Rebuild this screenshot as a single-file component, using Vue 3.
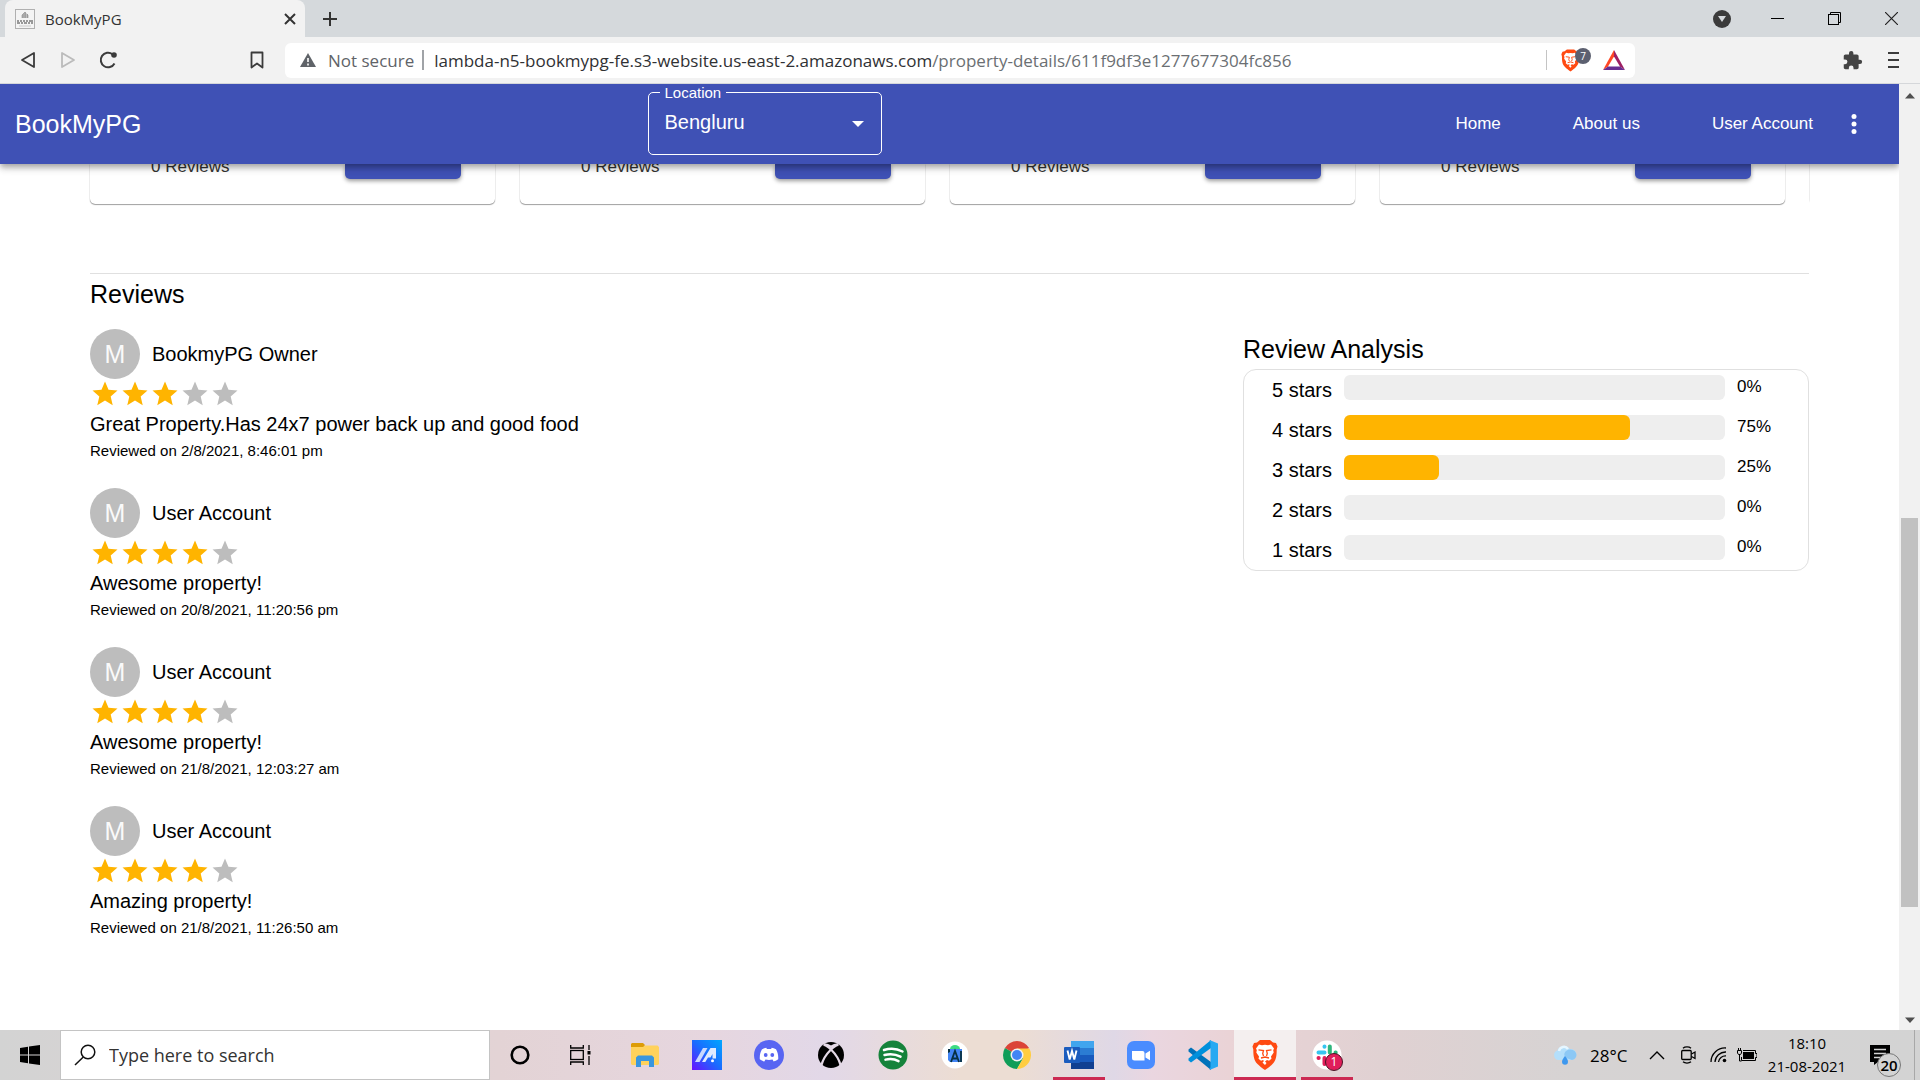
<script setup>
import { ref } from 'vue'

const location = ref('Bengluru')
const search = ref('')
const cards = [1, 2, 3, 4, 5]

const reviews = [
  { name: 'BookmyPG Owner', rating: 3, text: 'Great Property.Has 24x7 power back up and good food', date: '2/8/2021, 8:46:01 pm' },
  { name: 'User Account', rating: 4, text: 'Awesome property!', date: '20/8/2021, 11:20:56 pm' },
  { name: 'User Account', rating: 4, text: 'Awesome property!', date: '21/8/2021, 12:03:27 am' },
  { name: 'User Account', rating: 4, text: 'Amazing property!', date: '21/8/2021, 11:26:50 am' },
]

const analysis = [
  { stars: 5, percent: 0 },
  { stars: 4, percent: 75 },
  { stars: 3, percent: 25 },
  { stars: 2, percent: 0 },
  { stars: 1, percent: 0 },
]
</script>

<template>
  <div class="screen">
    <header class="tabstrip">
      <div class="tab">
        <svg class="favicon" width="20" height="20" viewBox="0 0 20 20">
          <rect x="0.5" y="0.5" width="19" height="19" fill="#f4f4f4" stroke="#b0b0b0" />
          <path d="M7 9V6l3-3 1 1v5M12 9V5l1 1v3" fill="#aaa" stroke="#8a8a8a" stroke-width="0.6" />
          <path d="M2 12h2M5 12h2M8 12h2M11 12h2M14 12h4M2 14h3M6 14h2M9 14h3M13 14h2M16 14h2" stroke="#999" stroke-width="2" />
          <path d="M4 17h12" stroke="#ccc" />
        </svg>
        <span class="tab-title">BookMyPG</span>
        <button class="plain tab-close" aria-label="Close tab">
          <svg width="12" height="12" viewBox="0 0 12 12"><path d="M1 1l10 10M11 1L1 11" stroke="#333" stroke-width="2" /></svg>
        </button>
      </div>
      <button class="plain new-tab" aria-label="New tab">
        <svg width="16" height="16" viewBox="0 0 16 16"><path d="M8 1v14M1 8h14" stroke="#333" stroke-width="2" /></svg>
      </button>
      <div class="window-buttons">
        <button class="plain winbtn circle-btn" aria-label="Search tabs">
          <svg width="18" height="18" viewBox="0 0 18 18"><circle cx="9" cy="9" r="9" fill="#3b3b3b" /><path d="M5 6h8l-4 6z" fill="#d5d9dc" /></svg>
        </button>
        <button class="plain winbtn" aria-label="Minimize">
          <svg width="13" height="13" viewBox="0 0 13 13"><path d="M0 6.5h13" stroke="#000" /></svg>
        </button>
        <button class="plain winbtn" aria-label="Restore">
          <svg width="13" height="13" viewBox="0 0 13 13" fill="none" stroke="#000"><rect x="0.5" y="2.5" width="10" height="10" /><path d="M2.5 2.5v-2h10v10h-2" /></svg>
        </button>
        <button class="plain winbtn" aria-label="Close">
          <svg width="13" height="13" viewBox="0 0 13 13"><path d="M0 0l13 13M13 0L0 13" stroke="#222" stroke-width="1.2" /></svg>
        </button>
      </div>
    </header>

    <nav class="toolbar">
      <button class="plain tool" aria-label="Back">
        <svg width="18" height="18" viewBox="0 0 18 18"><path d="M15 2v14L3 9z" fill="none" stroke="#3b3b3b" stroke-width="1.8" stroke-linejoin="round" /></svg>
      </button>
      <button class="plain tool" aria-label="Forward">
        <svg width="18" height="18" viewBox="0 0 18 18"><path d="M3 2v14l12-7z" fill="none" stroke="#bbb" stroke-width="1.8" stroke-linejoin="round" /></svg>
      </button>
      <button class="plain tool" aria-label="Reload">
        <svg width="18" height="18" viewBox="0 0 18 18"><path d="M15.5 12.5A7.3 7.3 0 1 1 13.5 3.2" fill="none" stroke="#3b3b3b" stroke-width="2" /><circle cx="15" cy="4" r="2.8" fill="#3b3b3b" /></svg>
      </button>
      <button class="plain tool bookmark" aria-label="Bookmark">
        <svg width="16" height="18" viewBox="0 0 16 18"><path d="M2.500 1.500h11v15l-5.500-4-5.500 4z" fill="none" stroke="#3b3b3b" stroke-width="1.8" stroke-linejoin="round" /></svg>
      </button>
      <div class="address">
        <svg width="16" height="14" viewBox="0 0 16 14"><path d="M8 0l8 14H0z" fill="#5f6368" /><path d="M8 5v4M8 10.500v2" stroke="#fff" stroke-width="1.6" /></svg>
        <span class="insecure">Not secure</span>
        <span class="sep"></span>
        <span class="url"><b>lambda-n5-bookmypg-fe.s3-website.us-east-2.amazonaws.com</b>/property-details/611f9df3e1277677304fc856</span>
        <span class="sep light"></span>
        <span class="shield">
          <svg width="19" height="23" viewBox="0 0 26 30"><use href="#brave-lion" /></svg>
          <span class="shield-count">7</span>
        </span>
        <svg class="bat" width="22" height="20" viewBox="0 0 22 20"><path d="M11 0L0 20l5-3.500 6-10z" fill="#ff4724" /><path d="M11 0l11 20-5-3.500-6-10z" fill="#9e1f63" /><path d="M0 20h22l-5-3.500H5z" fill="#662d91" /></svg>
      </div>
      <button class="plain tool puzzle" aria-label="Extensions">
        <svg width="21" height="21" viewBox="0 0 24 24"><path fill="#444" d="M20.500 11H19V7c0-1.100-.9-2-2-2h-4V3.500a2.500 2.500 0 0 0-5 0V5H4c-1.100 0-2 .9-2 2v3.800h1.500a2.700 2.700 0 0 1 0 5.400H2V20c0 1.100.9 2 2 2h3.800v-1.500a2.700 2.700 0 0 1 5.400 0V22H17c1.100 0 2-.9 2-2v-4h1.500a2.500 2.500 0 0 0 0-5z" /></svg>
      </button>
      <button class="plain tool" aria-label="Menu">
        <svg width="12" height="18" viewBox="0 0 12 18"><path d="M1 2h11M1 9h11M1 16h11" stroke="#3b3b3b" stroke-width="2" /></svg>
      </button>
    </nav>

    <div class="viewport">
      <div class="page">
        <header class="appbar">
          <a class="brand" href="#">BookMyPG</a>
          <fieldset class="location">
            <legend><label for="location">Location</label></legend>
            <select id="location" v-model="location">
              <option>Bengluru</option>
            </select>
            <svg class="caret" width="12" height="6" viewBox="0 0 12 6"><path d="M0 0h12L6 6z" fill="#fff" /></svg>
          </fieldset>
          <nav class="links">
            <a href="#">Home</a>
            <a href="#">About us</a>
            <a href="#">User Account</a>
            <button class="plain" aria-label="More">
              <svg width="6" height="20" viewBox="0 0 6 20" fill="#fff"><circle cx="3" cy="2.500" r="2.500" /><circle cx="3" cy="10" r="2.500" /><circle cx="3" cy="17.500" r="2.500" /></svg>
            </button>
          </nav>
        </header>

        <main class="content">
          <section class="carousel">
            <article v-for="c in cards" :key="c" class="card">
              <span>0 Reviews</span>
              <button class="plain card-action" aria-label="View"></button>
            </article>
          </section>

          <section class="reviews">
            <div class="review-list">
              <h2>Reviews</h2>
              <article v-for="(r, i) in reviews" :key="i" class="review">
                <div class="author"><span class="avatar">M</span><span>{{ r.name }}</span></div>
                <div class="stars" role="img" :aria-label="r.rating + ' of 5'">
                  <svg v-for="n in 5" :key="n" :class="{ on: n <= r.rating }" width="30" height="30" viewBox="0 0 24 24">
                    <path d="M12 17.270L18.180 21l-1.640-7.030L22 9.240l-7.190-.61L12 2 9.190 8.630 2 9.240l5.460 4.730L5.820 21z" />
                  </svg>
                </div>
                <p class="text">{{ r.text }}</p>
                <p class="date">Reviewed on {{ r.date }}</p>
              </article>
            </div>
            <aside class="analysis">
              <h2>Review Analysis</h2>
              <div class="bars">
                <div v-for="a in analysis" :key="a.stars" class="bar-row">
                  <span class="bar-label">{{ a.stars }} stars</span>
                  <div class="track"><div class="fill" :style="{ width: a.percent + '%' }"></div></div>
                  <span class="percent">{{ a.percent }}%</span>
                </div>
              </div>
            </aside>
          </section>
        </main>
      </div>
      <div class="scrollbar">
        <svg width="10" height="6" viewBox="0 0 10 6"><path d="M0 5.500h10L5 0z" fill="#505050" /></svg>
        <div class="rail"><div class="thumb"></div></div>
        <svg width="10" height="6" viewBox="0 0 10 6"><path d="M0 0.500h10L5 6z" fill="#505050" /></svg>
      </div>
    </div>

    <footer class="taskbar">
      <button class="plain start" aria-label="Start">
        <svg width="20" height="20" viewBox="0 0 20 20"><path d="M0 3l8-1.200V9.500H0zM9 1.600L20 0v9.500H9zM0 10.500h8v7.700L0 17zM9 10.500h11V20L9 18.400z" /></svg>
      </button>
      <label class="searchbox">
        <svg width="22" height="22" viewBox="0 0 22 22" fill="none" stroke="#111" stroke-width="1.500"><circle cx="14" cy="8" r="6.800" /><path d="M9.300 13L1 21" /></svg>
        <input v-model="search" type="text" placeholder="Type here to search" aria-label="Search" />
      </label>
      <div class="system-apps">
        <button class="plain" aria-label="Cortana">
          <svg width="20" height="20" viewBox="0 0 20 20"><circle cx="10" cy="10" r="8.300" fill="none" stroke="#000" stroke-width="2.600" /></svg>
        </button>
        <button class="plain" aria-label="Task view">
          <svg width="21" height="20" viewBox="0 0 21 20" fill="none" stroke="#000" stroke-width="1.300"><rect x="0.700" y="5.500" width="12.600" height="9" /><path d="M0.700 0v3h12.600V0M0.700 20v-3h12.600v3M19 0v5M19 11v9" /><path d="M17.500 6h3v3.500h-3z" fill="#000" stroke="none" /></svg>
        </button>
      </div>
      <div class="apps">
        <button class="plain" aria-label="File Explorer">
          <svg width="28" height="24" viewBox="0 0 28 24"><path d="M1 0h11l2 2-2 3H0V1z" fill="#dd9c06" /><path d="M0 4h12l2-1.500h12.500L28 4v17l-1 1H1l-1-1z" fill="#ffd25c" /><path d="M5 24v-9.500l2-2h14l2 2V24h-5v-6h-8v6z" fill="#3a96dd" /></svg>
        </button>
        <button class="plain" aria-label="Armoury">
          <svg width="30" height="30" viewBox="0 0 30 30"><defs><linearGradient id="g-arm" x1="0" y1="1" x2="1" y2="0"><stop offset="0" stop-color="#6a10ff" /><stop offset="0.500" stop-color="#1a6bff" /><stop offset="1" stop-color="#00a8ff" /></linearGradient></defs><path d="M0 0h30v30H0z" fill="url(#g-arm)" /><path d="M3 22L11 8h4.500L7.500 22z" fill="#c8d8ff" /><path d="M10 22l8.500-14H24v10.500h-3.500v-4.500l-2 3.500h-2.500l-2.700 4.500z" fill="#dfeaff" /><circle cx="20.500" cy="20.800" r="1.500" fill="#fff" /></svg>
        </button>
        <button class="plain" aria-label="Discord">
          <svg width="30" height="30" viewBox="0 0 30 30"><circle cx="15" cy="15" r="15" fill="#5865f2" /><path d="M8 9.300c1.600-.9 3-1.300 4.300-1.500l.6 1.200h4.200l.6-1.200c1.300.2 2.700.6 4.300 1.500 1.700 3 2.500 6.200 2.200 10-1.600 1.200-3 1.800-4.500 2.200l-1.200-2c-2.300.6-4.700.6-7 0l-1.200 2c-1.500-.4-2.900-1-4.500-2.200-.3-3.800.5-7 2.200-10z" fill="#fff" /><circle cx="11.700" cy="15" r="1.900" fill="#5865f2" /><circle cx="18.300" cy="15" r="1.900" fill="#5865f2" /></svg>
        </button>
        <button class="plain" aria-label="Xbox">
          <svg width="26" height="26" viewBox="0 0 26 26"><circle cx="13" cy="13" r="13" /><path d="M5.500 2.500C8 2 10.500 3 13 4.700 15.500 3 18 2 20.500 2.500M3.500 23C5 17 9 11.500 13 7.500 17 11.500 21 17 22.500 23M5.500 2.800C8.500 3 11 5.500 13 7.500c2-2 4.500-4.500 7.500-4.700" fill="none" stroke="#e4d9e6" stroke-width="2.200" /></svg>
        </button>
        <button class="plain" aria-label="Spotify">
          <svg width="30" height="30" viewBox="0 0 30 30"><circle cx="15" cy="15" r="14.500" fill="#15833b" /><path d="M6 10c6-2 13-1.500 18.500 1.500M6.500 15c5.500-1.500 11-1 16 1.700M7.500 19.600c4.500-1.200 9-.8 13 1.500" fill="none" stroke="#fff" stroke-width="2.500" stroke-linecap="round" /></svg>
        </button>
        <button class="plain" aria-label="Android Studio">
          <svg width="28" height="28" viewBox="0 0 28 28"><circle cx="14" cy="14" r="13.500" fill="#fff" /><path d="M9 8a5 4 0 0 1 10 0z" fill="#3ddc84" /><path d="M7 8h14v13H9l-2-2z" fill="#4285f4" /><path d="M7 8h2v3l-2 1z" fill="#073042" /><path d="M10 21l4-11 4 11M11.500 17.500h5M20 10v11" fill="none" stroke="#073042" stroke-width="1.800" /></svg>
        </button>
        <button class="plain" aria-label="Chrome">
          <svg width="28" height="28" viewBox="0 0 28 28"><path d="M14 14L1.900 7A14 14 0 0 1 26.100 7z" fill="#db4437" /><path d="M14 14L1.900 7A14 14 0 0 0 14 28l6-10.500z" fill="#0f9d58" /><path d="M14 7.500h12.400A14 14 0 0 1 14 28l6-10.500z" fill="#ffcd40" /><circle cx="14" cy="14" r="6.500" fill="#f1f1f1" /><circle cx="14" cy="14" r="5" fill="#4285f4" /></svg>
        </button>
        <button class="plain running" aria-label="Word">
          <svg width="30" height="28" viewBox="0 0 30 28"><path d="M7 0h23v7H7z" fill="#41a5ee" /><path d="M7 7h23v7H7z" fill="#2b7cd3" /><path d="M7 14h23v7H7z" fill="#185abd" /><path d="M7 21h23v7H7z" fill="#103f91" /><rect y="6" width="16" height="16" rx="1" fill="#1b5cbe" /><path d="M3.500 9.500l2.200 9 2.300-8.500 2.300 8.500 2.200-9" fill="none" stroke="#fff" stroke-width="1.900" /></svg>
        </button>
        <button class="plain" aria-label="Zoom">
          <svg width="28" height="28" viewBox="0 0 28 28"><rect width="28" height="28" rx="7" fill="#4a8cff" /><path d="M5 10h10.500a2 2 0 0 1 2 2v7.500H7.500A2.500 2.500 0 0 1 5 17zM18.500 12.500L23 9.700v9.600l-4.500-2.800z" fill="#fff" /></svg>
        </button>
        <button class="plain" aria-label="Visual Studio Code">
          <svg width="30" height="30" viewBox="0 0 30 30"><path d="M0.500 9.500L3 7.500 23 22v8L0.500 11.500z" fill="#0072ba" /><path d="M0.500 20.500L3 22.500 23 8V0L0.500 18.500z" fill="#0090dc" /><path d="M21.500 0L30 3.500v23L21.500 30l1-3V3z" fill="#27a9f2" /></svg>
        </button>
        <button class="plain running active" aria-label="Brave">
          <svg width="26" height="30" viewBox="0 0 26 30">
            <g id="brave-lion">
              <path d="M8 0h10l3 2.500 3 .5 1.500 3.500-.8 3c0 7-.7 11-4.200 14.500-2 2-5 4.500-7.500 6-2.500-1.500-5.500-4-7.500-6C2 20.500 1.300 16.500 1.300 9.500l-.8-3L2 3l3-.5z" fill="#ff4a12" />
              <path d="M7 4.500l3 .7 3-.5 3 .5 3-.7 3 4-.8 1.800.5 2.200-2.700 4 .5 2.300-2.500 2-2-.8-2 1.500 1.500 1.500L13 25l-2.500-2.500L12 21l-1-1-2 .8-2.500-2 .5-2.300-2.700-4 .5-2.200L4 8.500z" fill="#fff" />
              <path d="M6.500 9.800l5 .7-.8 3 .8 2.500M19.500 9.800l-5 .7.8 3-.8 2.500M9 18l4-1 4 1" fill="none" stroke="#ff4a12" stroke-width="1.300" />
            </g>
          </svg>
        </button>
        <button class="plain running" aria-label="Slack">
          <svg width="30" height="30" viewBox="0 0 30 30"><circle cx="15" cy="15" r="14.500" fill="#fff" /><g fill="none" stroke-width="4" stroke-linecap="round"><path d="M6.500 12.500h6M12.500 6.500v.2" stroke="#36c5f0" /><path d="M17.800 6.500v6M23.500 12.500h.2" stroke="#2eb67d" /><path d="M17.800 18h6M17.800 23.500v.2" stroke="#ecb22e" /><path d="M12.500 18v6M6.500 18h.2" stroke="#e01e5a" /></g></svg>
          <span class="badge">1</span>
        </button>
      </div>
      <div class="tray">
        <svg width="26" height="20" viewBox="0 0 26 20"><path d="M6 15a5 5 0 0 1-.8-9.500A7.500 7.500 0 0 1 18 4a5.600 5.600 0 0 1 2 11z" fill="#b4dffb" /><path d="M14 13a6 5 0 1 1 10-5 5 5 0 0 1-4 7z" fill="#8cc8f5" /><path d="M7 6a5 5 0 0 1 9-2" fill="none" stroke="#e6f6ff" stroke-width="2.500" /><path d="M13 11c2 2.500 3 4 3 5.800a3 3 0 0 1-6 0C10 15 11 13.500 13 11z" fill="#3f98ee" /></svg>
        <span class="temp">28°C</span>
        <svg class="chev" width="16" height="10" viewBox="0 0 16 10"><path d="M1 9l7-7 7 7" fill="none" stroke="#000" stroke-width="1.400" /></svg>
        <svg class="cam" width="15" height="18" viewBox="0 0 15 18" fill="none" stroke="#000" stroke-width="1.300"><rect x="0.700" y="4.500" width="9.500" height="9" rx="1" /><path d="M10.500 8l3.500-2v6.500l-3.500-2M2 2.200C4 .5 8 .5 10 2.200M2 15.800c2 1.700 6 1.700 8 0" /></svg>
        <svg class="wifi" width="17" height="16" viewBox="0 0 17 16" fill="none" stroke="#000" stroke-width="1.300"><path d="M1 15A14 14 0 0 1 16 1M5 15A10.500 10.500 0 0 1 16 5M8.500 15A7 7 0 0 1 16 8.800" /><circle cx="14.500" cy="13.500" r="1.800" fill="#000" stroke="none" /></svg>
        <svg class="battery" width="20" height="14" viewBox="0 0 20 14"><path d="M6 2.500h12.500v3H20v4h-1.500v3H4.500V9" fill="none" stroke="#000" /><path d="M6 4h11v7H6z" /><path d="M0.500 2.500h4v2.500l-1 1.500h-2l-1-1.500zM1.500 0v2.500M3.500 0v2.500M2.500 6v7h2" fill="none" stroke="#000" /></svg>
        <div class="clock"><span>18:10</span><span>21-08-2021</span></div>
        <button class="plain notify" aria-label="Notifications">
          <svg width="20" height="20" viewBox="0 0 20 20"><path d="M0 0h20v17H8l-4 3v-3H0z" /><path d="M4 4.500h12M4 8.500h12M4 12.500h8" stroke="#d3d3d3" stroke-width="1.300" /></svg>
          <span class="notify-count">20</span>
        </button>
      </div>
    </footer>
  </div>
</template>

<style>
body {
  margin: 0;
}
</style>

<style scoped>
* {
  box-sizing: border-box;
}
.screen {
  height: 100vh;
  display: flex;
  flex-direction: column;
  overflow: hidden;
  font-family: "Liberation Sans", Arial, sans-serif;
  color: #000;
}
svg {
  display: block;
  flex: none;
}
a {
  color: inherit;
  text-decoration: none;
}
.plain {
  display: flex;
  align-items: center;
  justify-content: center;
  padding: 0;
  border: 0;
  background: none;
  font: inherit;
}
.tabstrip,
.toolbar,
.taskbar {
  font-family: "Open Sans", "Noto Sans", sans-serif;
}

/* Browser chrome */
.tabstrip {
  display: flex;
  height: 37px;
  flex: none;
  background: #d5d9dc;
}
.tab {
  display: flex;
  align-items: center;
  width: 300px;
  margin-left: 5px;
  padding: 0 9px 0 10px;
  border-radius: 8px 8px 0 0;
  background: #f2f2f2;
}
.tab-title {
  flex: 1;
  margin-left: 10px;
  font-size: 15px;
  color: #333;
}
.new-tab {
  width: 50px;
}
.window-buttons {
  display: flex;
  margin-left: auto;
}
.winbtn {
  width: 57px;
}
.circle-btn {
  width: 54px;
}
.toolbar {
  display: flex;
  align-items: center;
  height: 47px;
  flex: none;
  padding: 0 21px 0 8px;
  border-bottom: 1px solid #d5d7da;
  background: #f2f2f2;
}
.tool {
  width: 40px;
  height: 36px;
}
.tool.bookmark {
  margin: 0 8px 0 109px;
}
.tool.puzzle {
  margin-left: auto;
}
.tool:last-child {
  width: 24px;
  margin-left: 3px;
  justify-content: flex-end;
}
.address {
  display: flex;
  align-items: center;
  flex: 0 1 1350px;
  height: 35px;
  padding: 0 10px 0 15px;
  border-radius: 6px;
  background: #fff;
  font-size: 17px;
  white-space: nowrap;
}
.insecure {
  margin-left: 12px;
  color: #5f6368;
}
.sep {
  width: 2px;
  height: 20px;
  margin: 0 10px 0 8px;
  background: #a0a3a7;
}
.sep.light {
  width: 1px;
  margin: 0 14px;
  background: #c4c4c4;
}
.url {
  flex: 1;
  overflow: hidden;
  color: #6b6f73;
}
.url b {
  font-weight: 400;
  color: #303134;
}
.shield {
  position: relative;
  width: 42px;
}
.shield-count {
  position: absolute;
  top: -1px;
  left: 14px;
  width: 16px;
  height: 16px;
  border-radius: 8px;
  background: #5c6070;
  color: #fff;
  font-size: 10px;
  line-height: 16px;
  text-align: center;
}

/* Web page */
.viewport {
  display: flex;
  flex: 1;
  min-height: 0;
}
.page {
  flex: 1;
  min-width: 0;
  overflow: hidden;
  background: #fff;
}
.appbar {
  position: relative;
  z-index: 1;
  display: grid;
  grid-template-columns: 1fr 234px 1fr;
  align-items: center;
  height: 80px;
  padding: 0 15px;
  background: #3f51b5;
  color: #fff;
  box-shadow: 0 3px 5px -1px rgba(0, 0, 0, 0.2), 0 5px 6px rgba(0, 0, 0, 0.14), 0 1px 12px rgba(0, 0, 0, 0.12);
}
.brand {
  font-size: 25px;
}
.location {
  position: relative;
  right: 185px;
  align-self: start;
  height: 71px;
  margin: 0;
  padding: 0;
  border: 1px solid #fff;
  border-radius: 5px;
}
.location legend {
  margin-left: 11px;
  padding: 0 5px;
  font-size: 15px;
  line-height: 17px;
}
.location select {
  width: 100%;
  height: 42px;
  padding: 0 16px;
  border: 0;
  appearance: none;
  background: transparent;
  color: #fff;
  font-family: inherit;
  font-size: 20px;
}
.caret {
  position: absolute;
  right: 17px;
  top: 20px;
  pointer-events: none;
}
.links {
  display: flex;
  align-items: center;
  justify-content: flex-end;
  padding-right: 27px;
  font-size: 17px;
}
.links a {
  margin-right: 38px;
  white-space: nowrap;
}
.links a + a {
  margin-left: 34px;
}
.links button {
  width: 6px;
}
.content {
  padding: 0 90px;
}
.carousel {
  display: flex;
  gap: 25px;
  overflow: hidden;
  margin: 0 -1px 59px;
  padding: 0 0 10px 1px;
}
.card {
  display: flex;
  flex: 0 0 calc((100% - 100px) / 4);
  align-items: flex-start;
  justify-content: space-between;
  height: 40px;
  padding: 0 34px 0 61px;
  border-radius: 0 0 5px 5px;
  box-shadow: 0 1px 1px rgba(0, 0, 0, 0.35), 0 0 1px rgba(0, 0, 0, 0.35);
  font-size: 17px;
  line-height: 5px;
  color: #333;
}
.card-action {
  width: 116px;
  height: 15px;
  border-radius: 0 0 5px 5px;
  background: #3f51b5;
  box-shadow: 0 2px 4px rgba(0, 0, 0, 0.4);
}
.reviews {
  display: flex;
  justify-content: space-between;
  border-top: 1px solid #e0e0e0;
}
h2 {
  margin: 0;
  font-size: 25px;
  font-weight: 400;
  line-height: 40px;
}
.review-list h2 {
  margin-bottom: 15px;
}
.review {
  height: 159px;
}
.author {
  display: flex;
  align-items: center;
  gap: 12px;
  font-size: 20px;
}
.avatar {
  width: 50px;
  border-radius: 50%;
  background: #bdbdbd;
  color: #fafafa;
  font-size: 25px;
  line-height: 50px;
  text-align: center;
}
.stars {
  display: flex;
  fill: #bdbdbd;
}
.stars .on {
  fill: #ffb400;
}
.review p {
  margin: 0;
}
.text {
  font-size: 20px;
  line-height: 30px;
}
.date {
  font-size: 15px;
  line-height: 24px;
}
.analysis {
  flex: 0 1 566px;
  padding-top: 55px;
}
.bars {
  display: grid;
  gap: 15px;
  padding: 5px 33px 10px 28px;
  border: 1px solid #e0e0e0;
  border-radius: 13px;
}
.bar-row {
  display: grid;
  grid-template-columns: 60px 1fr 38px;
  grid-template-rows: 25px;
  gap: 12px;
}
.bar-label {
  font-size: 20px;
  line-height: 30px;
  white-space: nowrap;
}
.track {
  border-radius: 6px;
  background: #eee;
}
.fill {
  height: 100%;
  border-radius: 6px;
  background: #ffb400;
}
.percent {
  font-size: 17px;
  line-height: 24px;
}
.scrollbar {
  display: flex;
  flex-direction: column;
  align-items: center;
  width: 21px;
  padding: 9px 0 7px;
  background: #f1f1f1;
}
.rail {
  flex: 1;
  width: 17px;
  padding-top: 419px;
}
.thumb {
  height: 389px;
  background: #c1c1c1;
}

/* Desktop taskbar */
.taskbar {
  display: flex;
  height: 50px;
  flex: none;
  background: linear-gradient(90deg, #d3d3d3 0, #e3d3d5 26%, #e6d6df 37%, #e2d8e8 43%, #ecddd3 50%, #ecddd3 53%, #dfd8e6 58%, #ead6e0 60%, #ead3d6 64%, #e0d1d2 72%, #d6d3d3 82%, #d3d3d3 100%);
}
.start {
  width: 60px;
}
.searchbox {
  display: flex;
  align-items: center;
  gap: 13px;
  width: 430px;
  padding-left: 13px;
  border: 1px solid #c4c4c4;
  background: #fff;
}
.searchbox input {
  flex: 1;
  min-width: 0;
  padding: 0;
  border: 0;
  outline: 0;
  font-family: inherit;
  font-size: 18px;
}
.searchbox input::placeholder {
  color: #333;
  opacity: 1;
}
.system-apps {
  display: flex;
  margin-right: 4px;
}
.system-apps button {
  width: 60px;
}
.apps {
  display: flex;
}
.apps button {
  position: relative;
  width: 62px;
}
.running::after {
  content: "";
  position: absolute;
  left: 5px;
  right: 5px;
  bottom: 0;
  height: 3px;
  background: #cc2952;
}
.active {
  background: #f4efef;
}
.active::after {
  left: 0;
  right: 0;
}
.badge {
  position: absolute;
  left: 29px;
  top: 23px;
  width: 18px;
  height: 18px;
  border: 1px solid #4a1526;
  border-radius: 50%;
  background: #e01e5a;
  color: #fff;
  font-size: 12px;
  line-height: 16px;
  text-align: center;
}
.tray {
  display: flex;
  align-items: center;
  margin-left: auto;
  margin-right: 5px;
  padding-right: 9px;
  border-right: 1px solid #a8a8a8;
}
.temp {
  width: 48px;
  margin: 0 11px 0 12px;
  font-size: 17px;
}
.cam {
  margin-left: 16px;
}
.wifi {
  margin-left: 14px;
}
.battery {
  margin-left: 10px;
}
.clock {
  display: grid;
  width: 100px;
  font-size: 15px;
  line-height: 23px;
  text-align: center;
}
.notify {
  position: relative;
  width: 46px;
  height: 50px;
  margin-left: 2px;
  padding-right: 4px;
}
.notify-count {
  position: absolute;
  left: 18px;
  top: 23px;
  width: 24px;
  height: 24px;
  border: 1px solid #777;
  border-radius: 50%;
  background: #d3d3d3;
  font-size: 15px;
  font-weight: 600;
  line-height: 22px;
  text-align: center;
}
</style>
